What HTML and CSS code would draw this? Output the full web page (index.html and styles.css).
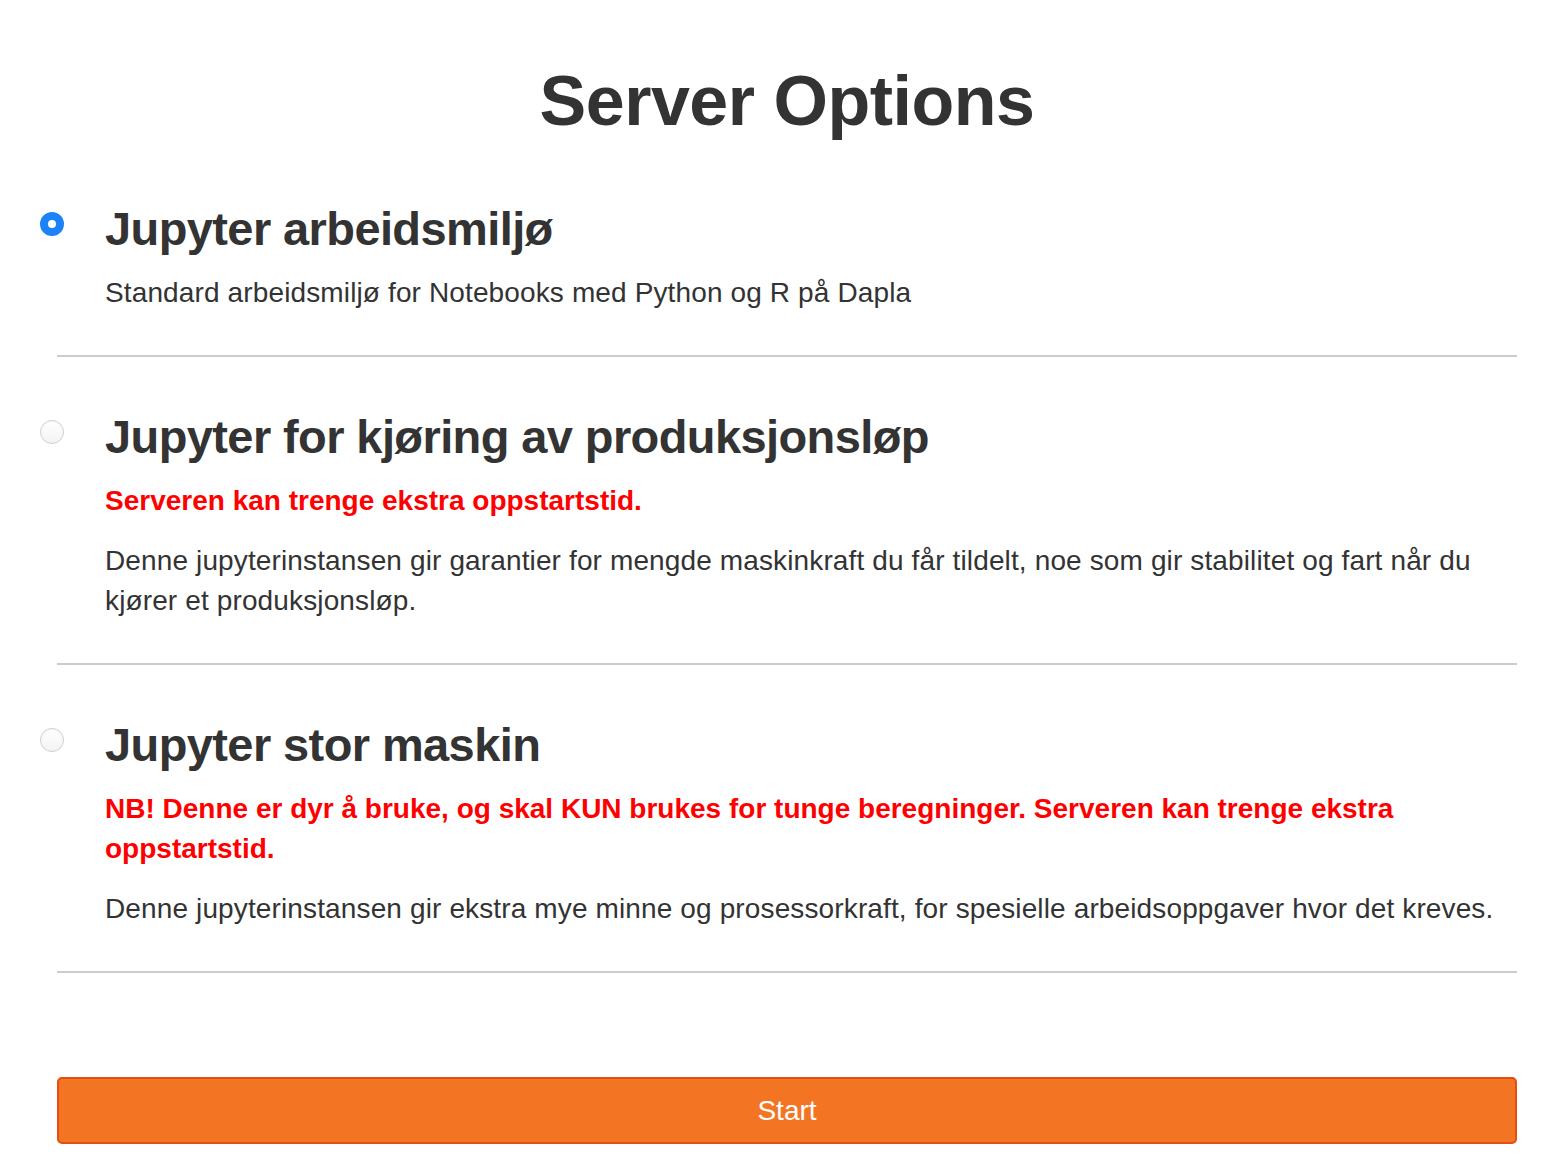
FILE: index.html
```html
<!DOCTYPE html>
<html lang="no">
<head>
<meta charset="utf-8">
<title>Server Options</title>
<link rel="stylesheet" href="styles.css">
</head>
<body>
<main class="page">
  <h1 class="title">Server Options</h1>
  <form class="options">
    <label class="option">
      <span class="radio radio-checked"></span>
      <span class="option-body">
        <span class="option-title">Jupyter arbeidsmiljø</span>
        <span class="option-desc">Standard arbeidsmiljø for Notebooks med Python og R på Dapla</span>
      </span>
    </label>
    <hr class="divider">
    <label class="option">
      <span class="radio"></span>
      <span class="option-body">
        <span class="option-title">Jupyter for kjøring av produksjonsløp</span>
        <span class="option-warn">Serveren kan trenge ekstra oppstartstid.</span>
        <span class="option-desc">Denne jupyterinstansen gir garantier for mengde maskinkraft du får tildelt, noe som gir stabilitet og fart når du kjører et produksjonsløp.</span>
      </span>
    </label>
    <hr class="divider">
    <label class="option">
      <span class="radio"></span>
      <span class="option-body">
        <span class="option-title">Jupyter stor maskin</span>
        <span class="option-warn">NB! Denne er dyr å bruke, og skal KUN brukes for tunge beregninger. Serveren kan trenge ekstra oppstartstid.</span>
        <span class="option-desc">Denne jupyterinstansen gir ekstra mye minne og prosessorkraft, for spesielle arbeidsoppgaver hvor det kreves.</span>
      </span>
    </label>
    <hr class="divider">
    <div class="actions">
      <button type="button" class="btn-start">Start</button>
    </div>
  </form>
</main>
</body>
</html>
```
FILE: styles.css
```css
* { box-sizing: border-box; }
html, body { margin: 0; padding: 0; background: #fff; }
body {
  font-family: "Liberation Sans", Arial, sans-serif;
  color: #333;
  font-size: 28px;
  line-height: 40px;
}
.page {
  padding: 62px 41px 0 40px;
}
.title {
  margin: 0 0 61px 17px;
  text-align: center;
  font-size: 70px;
  line-height: 79px;
  font-weight: bold;
  color: #333;
  letter-spacing: -0.5px;
}
.options { display: flex; flex-direction: column; }
.option {
  display: flex;
  align-items: flex-start;
  cursor: pointer;
}
.radio {
  flex: 0 0 24px;
  width: 24px;
  height: 24px;
  margin-top: 10px;
  margin-right: 41px;
  border-radius: 50%;
  border: 1px solid #cfcfcf;
  background: linear-gradient(#ffffff, #f3f3f3);
  box-shadow: inset 0 1px 1px rgba(0,0,0,0.04);
  position: relative;
}
.radio-checked {
  border: none;
  background: #1b82f8;
  box-shadow: none;
}
.radio-checked::after {
  content: "";
  position: absolute;
  left: 8px;
  top: 8px;
  width: 8px;
  height: 8px;
  border-radius: 50%;
  background: #fff;
}
.option-body {
  display: flex;
  flex-direction: column;
  flex: 1 1 auto;
  min-width: 0;
}
.option-title {
  font-size: 47px;
  line-height: 53px;
  font-weight: bold;
  margin-bottom: 18px;
  letter-spacing: -0.6px;
}
.option-warn {
  color: #ff0000;
  font-weight: bold;
  margin-bottom: 20px;
}
.option-desc {
  letter-spacing: 0.13px;
}
.divider {
  border: 0;
  height: 2px;
  background: #cccccc;
  margin: 42px 0 53px 17px;
}
.options > .divider:last-of-type {
  margin-bottom: 104px;
}
.actions {
  padding-left: 17px;
}
.btn-start {
  display: block;
  width: 100%;
  height: 67px;
  font-family: "Liberation Sans", Arial, sans-serif;
  font-size: 28px;
  color: #fff;
  background: #f37524;
  border: 2px solid #e34e12;
  border-radius: 5px;
  cursor: pointer;
}
```
